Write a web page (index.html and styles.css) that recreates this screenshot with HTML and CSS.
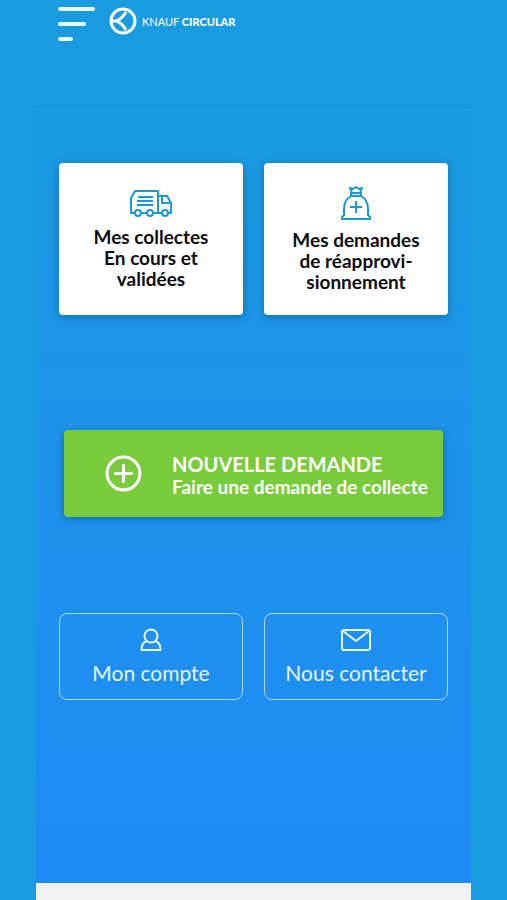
FILE: index.html
```html
<!DOCTYPE html>
<html lang="fr">
<head>
<meta charset="utf-8">
<meta name="viewport" content="width=device-width, initial-scale=1">
<title>Knauf Circular</title>
<link rel="stylesheet" href="styles.css">
</head>
<body>
<div class="app">
  <header class="header">
    <button class="menu" type="button" aria-label="Menu"><span class="bar"></span><span class="bar bar-mid"></span><span class="bar bar-short"></span></button>
    <a class="brand" href="#">
      <svg class="brand-logo" viewBox="0 0 28 28" fill="none" stroke="currentColor" aria-hidden="true">
        <circle cx="14" cy="14" r="12" stroke-width="3"/>
        <path d="M3 14H8" stroke-width="3"/>
        <path d="M7 14C11 13 14 10 17 5M7 14C11 15 14 18 17 23" stroke-width="3"/>
      </svg>
      <span class="brand-name">KNAUF <b>CIRCULAR</b></span>
    </a>
  </header>
  <main class="content">
    <nav class="pair">
      <a class="card" href="#">
        <svg class="icon-truck" viewBox="0 0 44 28" fill="none" stroke="currentColor" stroke-width="2" stroke-linejoin="round">
          <path d="M6 24H2V9L6 2H29V24H24M18 24H12M29 7H38L42 14V24H39M33 24H29M33 8V14H41M9 8H24M8 12H24M8 16H24"/>
          <circle cx="9" cy="24" r="3"/><circle cx="21" cy="24" r="3"/><circle cx="36" cy="24" r="3"/>
        </svg>
        <span>Mes collectes<br>En cours et<br>validées</span>
      </a>
      <a class="card" href="#">
        <svg class="icon-bag" viewBox="0 0 30 34" fill="none" stroke="currentColor" stroke-width="2" stroke-linejoin="round">
          <path d="M11 7L9 2L12 3L15 1L18 3L21 2L19 7M9 7H21M9 10H21M10 7V10M20 7V10M10 10C5 13 3 18 3 23V29L1 31V33H29V31L27 29V23C27 18 25 13 20 10M15 15V27M9 21H21"/>
        </svg>
        <span>Mes demandes<br>de réapprovi-<br>sionnement</span>
      </a>
    </nav>
    <a class="request" href="#">
      <svg class="icon-plus" viewBox="0 0 36 36" fill="none" stroke="currentColor" stroke-width="3">
        <circle cx="18" cy="18" r="16"/><path d="M18 9V27M9 18H27"/>
      </svg>
      <span class="request-text"><strong class="request-title">NOUVELLE DEMANDE</strong><span class="request-sub">Faire une demande de collecte</span></span>
    </a>
    <nav class="pair">
      <a class="link" href="#">
        <svg class="icon-small" viewBox="0 0 32 24" fill="none" stroke="currentColor" stroke-width="2" stroke-linejoin="round">
          <circle cx="16" cy="8" r="6.500"/><path d="M11.500 13C8 14.500 6.500 17 6.500 22H25.500C25.500 17 24 14.500 20.500 13"/>
        </svg>
        <span>Mon compte</span>
      </a>
      <a class="link" href="#">
        <svg class="icon-small" viewBox="0 0 32 24" fill="none" stroke="currentColor" stroke-width="2" stroke-linejoin="round">
          <rect x="2" y="2" width="28" height="20" rx="2"/><path d="M3 3L16 13L29 3"/>
        </svg>
        <span>Nous contacter</span>
      </a>
    </nav>
  </main>
  <footer class="footer"></footer>
</div>
</body>
</html>
```
FILE: styles.css
```css
* { box-sizing: border-box; }
body {
  margin: 0;
  background: #199bdf;
  font-family: "Century Gothic", Lato, "Liberation Sans", sans-serif;
}
a { color: inherit; text-decoration: none; }
svg { display: block; }
.app {
  display: flex;
  flex-direction: column;
  min-height: 100vh;
  margin: 0 36px;
}
.header {
  display: flex;
  align-items: flex-start;
  gap: 14px;
  padding: 7px 22px 68px;
  border-bottom: 1px solid #2ba4e2;
  color: #fff;
}
.menu {
  display: flex;
  flex-direction: column;
  gap: 11px;
  width: 37px;
  padding: 0;
  border: 0;
  background: none;
}
.bar { width: 100%; height: 4px; border-radius: 2px; background: #e9fbff; }
.bar-mid { width: 75%; }
.bar-short { width: 40%; }
.brand { display: flex; align-items: center; gap: 5px; }
.brand-logo { width: 28px; height: 28px; }
.brand-name { font-size: 11px; font-weight: 400; white-space: nowrap; }
.brand-name b { font-weight: 900; }
.content {
  flex: 1;
  padding: 53px 23px;
  background: linear-gradient(#199bdf, #1e92ec 50%, #1e8bf6);
}
.pair { display: grid; grid-template-columns: 1fr 1fr; gap: 21px; }
.card {
  display: flex;
  flex-direction: column;
  align-items: center;
  justify-content: center;
  gap: 9px;
  height: 152px;
  border-radius: 4px;
  background: #fff;
  color: #0d0d0f;
  box-shadow: 0 2px 9px rgba(0, 45, 85, .4);
  font-size: 19px;
  font-weight: 700;
  line-height: 21px;
  text-align: center;
}
.icon-truck { width: 44px; height: 28px; color: #1998d5; }
.icon-bag { width: 30px; height: 34px; color: #1998d5; }
.request {
  display: flex;
  align-items: center;
  gap: 30px;
  height: 87px;
  margin: 115px 5px 96px;
  padding: 0 16px 0 41px;
  border-radius: 4px;
  background: #78cb3a;
  color: #fff;
  box-shadow: 0 2px 9px rgba(0, 45, 85, .4);
  white-space: nowrap;
}
.icon-plus { flex: none; width: 37px; height: 37px; }
.request-text { display: flex; flex-direction: column; padding-top: 2px; }
.request-title { font-size: 20px; line-height: 24px; }
.request-sub { font-size: 19px; font-weight: 700; line-height: 22px; }
.link {
  display: flex;
  flex-direction: column;
  align-items: center;
  gap: 9px;
  height: 87px;
  padding-top: 14px;
  border: 1px solid #a6dbff;
  border-radius: 8px;
  color: #e6f6ff;
  font-size: 21px;
  line-height: 24px;
}
.icon-small { width: 32px; height: 24px; }
.footer { height: 17px; background: #f1f1f1; }
```
